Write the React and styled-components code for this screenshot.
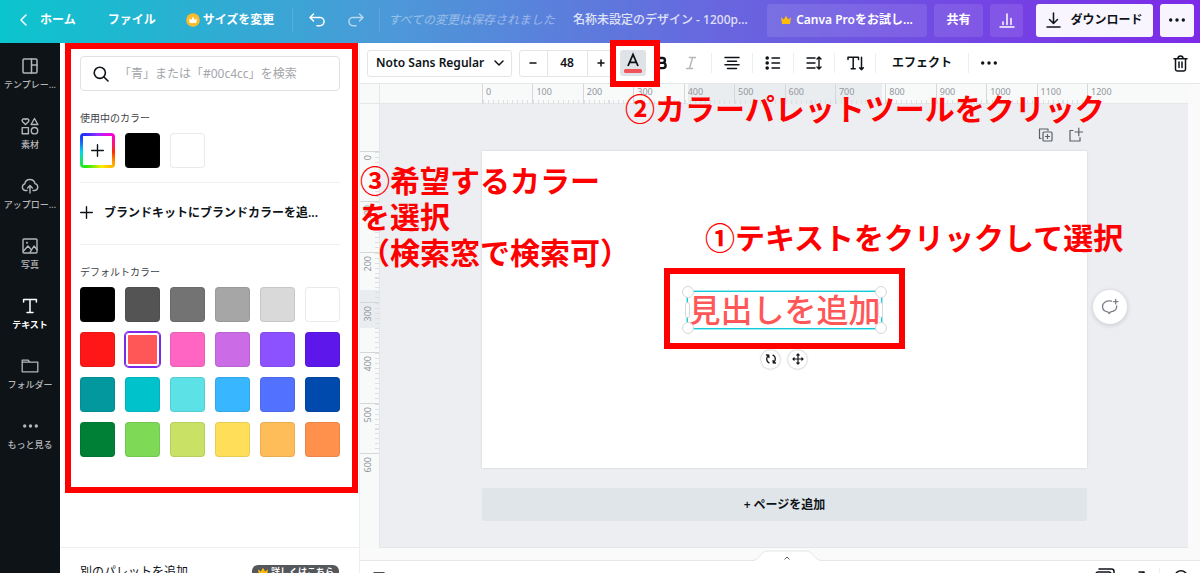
import React from "react";
import styled, { createGlobalStyle, css } from "styled-components";

const GlobalStyle = createGlobalStyle`
  *, *::before, *::after { box-sizing: border-box; }
  body {
    margin: 0;
    color: #0e1318;
    font-family: "Noto Sans", "Noto Sans CJK JP", sans-serif;
    font-size: 12px;
    line-height: 16px;
  }
  button, input, select {
    margin: 0;
    padding: 0;
    border: 0;
    background: none;
    color: inherit;
    font: inherit;
  }
  button { cursor: pointer; white-space: nowrap; }
  svg { display: block; flex: none; }
`;

const MARK = "#ff0000";
const LINE = "#e4e6e9";

/* ---------- icons ---------- */

function Icon({ w = 24, h, sw = 1.5, children }) {
  const height = h || w;
  return (
    <svg
      width={w}
      height={height}
      viewBox={`0 0 ${w} ${height}`}
      fill="none"
      stroke="currentColor"
      strokeWidth={sw}
      strokeLinecap="round"
      strokeLinejoin="round"
      aria-hidden="true"
    >
      {children}
    </svg>
  );
}

const Crown = () => (
  <svg width="10" height="10" viewBox="0 0 10 9" aria-hidden="true">
    <path d="M0 1.8 2.8 4 5 .3 7.200 4 10 1.800 9 8.500H1Z" fill="#fdbc0b" />
  </svg>
);

const CrownBadge = () => (
  <svg width="14" height="14" viewBox="0 0 14 14" aria-hidden="true">
    <circle cx="7" cy="7" r="6.8" fill="#fdbc2b" />
    <path d="M3 5.6 5.2 7 7 3.6 8.8 7 11 5.6 10.2 10H3.8Z" fill="#fff" />
  </svg>
);

const Dots = ({ w = 16, r = 1.7 }) => (
  <svg width={w} height="6" viewBox={`0 0 ${w} 6`} fill="currentColor" aria-hidden="true">
    <circle cx={r} cy="3" r={r} />
    <circle cx={w / 2} cy="3" r={r} />
    <circle cx={w - r} cy="3" r={r} />
  </svg>
);

const Plus = () => (
  <Icon w={13} sw={1.4}><path d="M6.5 .7v11.6M.7 6.5h11.6" /></Icon>
);

/* ---------- header ---------- */

const Shell = styled.div`
  display: flex;
  flex-direction: column;
  height: 100vh;
  overflow: hidden;
`;

const Header = styled.header`
  flex: none;
  display: flex;
  align-items: center;
  justify-content: space-between;
  height: 43px;
  padding: 0 6px 3px 20px;
  background: linear-gradient(90deg, #0bc5cd 0%, #4d98d8 33%, #6866df 60%, #7d2ae8 100%);
  color: #fff;
`;

const HeaderGroup = styled.div`
  display: flex;
  align-items: center;
`;

const NavButton = styled.button`
  display: flex;
  align-items: center;
  gap: ${(p) => p.$gap || 4}px;
  margin-right: ${(p) => p.$after || 0}px;
  font-weight: 700;
  opacity: ${(p) => (p.$dim ? 0.6 : 1)};
`;

const HeaderLine = styled.span`
  width: 1px;
  height: 24px;
  margin-right: ${(p) => p.$after}px;
  background: rgba(255, 255, 255, 0.12);
`;

const SavedNote = styled.span`
  margin-right: 18px;
  font-style: italic;
  opacity: 0.4;
  white-space: nowrap;
`;

const DesignTitle = styled.span`
  font-weight: 500;
  opacity: 0.8;
  white-space: nowrap;
`;

const HeaderButton = styled.button`
  display: flex;
  align-items: center;
  justify-content: center;
  gap: ${(p) => p.$gap || 5}px;
  width: ${(p) => p.$w}px;
  height: 33px;
  margin-left: ${(p) => p.$before || 7}px;
  border-radius: 3px;
  font-weight: 600;
  background: rgba(255, 255, 255, 0.1);
  ${(p) =>
    p.$solid &&
    css`
      background: #f9f5fe;
      color: #0e1318;
      font-weight: 700;
    `}
`;

/* ---------- left rail ---------- */

const Body = styled.div`
  flex: 1;
  display: flex;
  min-height: 0;
`;

const Rail = styled.nav`
  flex: none;
  width: 60px;
  padding-top: 9px;
  background: #0e1318;
`;

const RailItem = styled.button`
  display: flex;
  flex-direction: column;
  align-items: center;
  width: 100%;
  height: 60px;
  font-size: 9px;
  line-height: 12px;
  color: ${(p) => (p.$active ? "#fff" : "#b4b6b8")};
  font-weight: ${(p) => (p.$active ? 700 : 500)};
`;

const RailIcon = styled.span`
  display: grid;
  place-items: center;
  height: 27px;
`;

/* ---------- colour panel ---------- */

const Panel = styled.aside`
  position: relative;
  z-index: 2;
  flex: none;
  display: flex;
  flex-direction: column;
  width: 300px;
  border-right: 1px solid #eceef0;
  background: #fff;
`;

const PanelContent = styled.div`
  flex: 1;
  min-height: 0;
  overflow: hidden;
  padding: 13px 19px 0 20px;
`;

const SearchBox = styled.label`
  display: flex;
  align-items: center;
  gap: 10px;
  height: 35px;
  padding: 0 12px;
  border: 1px solid #dfe1e4;
  border-radius: 4px;
`;

const SearchInput = styled.input`
  flex: 1;
  min-width: 0;
  outline: 0;
  &::placeholder { color: #a3a6aa; opacity: 1; }
`;

const SectionTitle = styled.h2`
  margin: 19px 0 7px;
  font-size: 10px;
  font-weight: 400;
  line-height: 16px;
  color: #3f4347;
`;

const Swatches = styled.div`
  display: grid;
  grid-template-columns: repeat(6, 35px);
  justify-content: space-between;
  row-gap: 10px;
`;

const Swatch = styled.button`
  height: 35px;
  border-radius: 4px;
  background: ${(p) => p.$color};
  box-shadow: ${(p) =>
    p.$selected
      ? "0 0 0 1px #7d2ae8, inset 0 0 0 1px #7d2ae8, inset 0 0 0 3px #fff"
      : "inset 0 0 0 1px rgba(14, 19, 24, 0.09)"};
`;

const AddSwatch = styled.button`
  display: grid;
  height: 35px;
  padding: 3px;
  border-radius: 4px;
  background: conic-gradient(#9a2cff, #ff00d4 45deg, #ff2a00 95deg, #ffa800 130deg, #fff000 165deg, #2be80c 215deg, #00d9e8 265deg, #1d2cff 315deg, #9a2cff);
`;

const AddSwatchFace = styled.span`
  display: grid;
  place-items: center;
  background: #fff;
`;

const BrandButton = styled.button`
  display: flex;
  align-items: center;
  gap: 11px;
  width: 100%;
  height: 63px;
  margin-top: 14px;
  padding-bottom: 2px;
  border: solid #f0f1f3;
  border-width: 1px 0;
  font-weight: 600;
`;

const PanelFooter = styled.footer`
  flex: none;
  display: flex;
  align-items: flex-start;
  justify-content: space-between;
  height: 26px;
  padding: 16px 20px 0;
  border-top: 1px solid #eceef0;
  overflow: hidden;
`;

const MoreLink = styled.a`
  display: flex;
  align-items: center;
  gap: 3px;
  height: 16px;
  margin-top: 1px;
  padding: 0 5px 2px 6px;
  border-radius: 6px;
  background: #54575b;
  color: #fff;
  font-size: 9px;
  font-weight: 700;
  text-decoration: none;
`;

const PanelFrame = styled.div`
  position: absolute;
  top: 0;
  left: 5px;
  right: 1px;
  height: 450px;
  border: 6px solid ${MARK};
  pointer-events: none;
`;

/* ---------- toolbar ---------- */

const Main = styled.main`
  position: relative;
  flex: 1;
  display: flex;
  flex-direction: column;
  min-width: 0;
`;

const Toolbar = styled.div`
  flex: none;
  display: flex;
  align-items: center;
  height: 41px;
  padding: 0 12px 0 7px;
  border-bottom: 1px solid ${LINE};
  background: #fff;
`;

const FontPicker = styled.label`
  display: flex;
  align-items: center;
  width: 145px;
  height: 27px;
  padding: 0 7px 0 8px;
  border: 1px solid #e3e5e8;
  border-radius: 3px;
`;

const FontSelect = styled.select`
  flex: 1;
  min-width: 0;
  appearance: none;
  outline: 0;
  font-weight: 600;
`;

const SizeGroup = styled.div`
  display: flex;
  width: 96px;
  height: 27px;
  margin-left: 7px;
  border: 1px solid #e3e5e8;
  border-radius: 3px;
`;

const SizeStep = styled.button`
  display: grid;
  place-items: center;
  flex: 1;
`;

const SizeInput = styled.input`
  width: 41px;
  border: solid #e3e5e8;
  border-width: 0 1px;
  outline: 0;
  text-align: center;
  font-weight: 600;
`;

const ToolGroup = styled.div`
  display: flex;
  align-items: center;
  margin-right: 5px;
`;

const ToolButton = styled.button`
  display: grid;
  place-items: center;
  width: ${(p) => p.$w || 40}px;
  height: 26px;
  border-radius: 3px;
  font-weight: 600;
  opacity: ${(p) => (p.$dim ? 0.3 : 1)};
`;

const ColorButton = styled(ToolButton)`
  position: relative;
  margin: 0 2px 0 5px;
  background: #dfe2e6;
`;

const ColorFrame = styled.span`
  position: absolute;
  z-index: 3;
  inset: -10px -14px -11px -10px;
  border: 6px solid ${MARK};
  pointer-events: none;
`;

const Divider = styled.span`
  width: 1px;
  height: 20px;
  background: #eceef0;
`;

const Spacer = styled.span`
  flex: 1;
`;

/* ---------- workspace ---------- */

const Workspace = styled.div`
  flex: 1;
  display: grid;
  grid-template: 20px minmax(0, 1fr) / 20px minmax(0, 1fr) 12px;
  min-height: 0;
  background: #fafafa;
`;

const Corner = styled.div`
  border: solid ${LINE};
  border-width: 0 1px 1px 0;
  background: #f8fafa;
`;

const RulerX = styled.div`
  display: grid;
  grid-template: 20px / 102px repeat(12, minmax(0, 1fr)) 101px;
  border-bottom: 1px solid ${LINE};
  background: #f8fafa;
`;

const tickLabel = css`
  font-size: 9px;
  line-height: 16px;
  color: #93979c;
`;

const TickX = styled.span`
  ${tickLabel}
  grid-area: 1 / ${(p) => p.$col};
  padding-left: 3px;
  border-left: 1px solid #d5d8db;
  ${(p) =>
    !p.$last &&
    css`
      background: repeating-linear-gradient(90deg, #dde0e3 0 1px, transparent 1px 10%) 0 100% / 100% 4px no-repeat;
    `}
`;

const RangeX = styled.span`
  grid-area: 1 / 2 / 2 / 14;
  justify-self: center;
  width: 194px;
  background: #eaedf0;
`;

const RulerY = styled.div`
  grid-column: 1;
  padding-top: 47px;
  border-right: 1px solid ${LINE};
  background: #f8fafa;
`;

const ScaleY = styled.div`
  display: grid;
  grid-template: repeat(6, 100fr) 30fr / 19px;
  height: 317px;
`;

const TickY = styled.span`
  grid-area: ${(p) => p.$row} / 1;
  min-height: 0;
  border-top: 1px solid #d5d8db;
  ${(p) =>
    !p.$last &&
    css`
      background: repeating-linear-gradient(180deg, #dde0e3 0 1px, transparent 1px 10%) 100% 0 / 4px 100% no-repeat;
    `}
`;

const TickYText = styled.span`
  ${tickLabel}
  display: block;
  width: 17px;
  padding-bottom: 3px;
  writing-mode: vertical-rl;
  transform: rotate(180deg);
`;

const RangeY = styled.span`
  grid-area: 1 / 1 / 8 / 2;
  align-self: center;
  height: 38px;
  background: #eaedf0;
`;

const Canvas = styled.div`
  position: relative;
  padding: 22px 101px 0 102px;
  border-bottom: 1px solid ${LINE};
  background: #eceef2;
`;

const PageActions = styled.div`
  display: flex;
  justify-content: flex-end;
  gap: 15px;
  height: 25px;
  padding-right: 4px;
  color: #5b6066;
`;

const ActionButton = styled.button`
  height: 18px;
`;

const Page = styled.section`
  display: grid;
  place-items: center;
  height: 317px;
  background: #fff;
  box-shadow: 0 0 2px rgba(14, 19, 24, 0.14);
`;

const TextBox = styled.div`
  position: relative;
  border: 1px solid #11cbd8;
  outline: 1px solid rgba(17, 203, 216, 0.4);
  font-size: 32px;
  font-weight: 500;
  line-height: 36px;
  color: #ff5757;
  white-space: nowrap;
`;

const TextMark = styled.span`
  position: absolute;
  inset: -24px -24px -21px -24px;
  border: 6px solid ${MARK};
`;

const Handle = styled.span`
  position: absolute;
  width: 12px;
  height: 12px;
  margin: -6px;
  border: 1px solid #d5d8db;
  border-radius: 6px;
  background: #fff;
  top: ${(p) => p.$y};
  left: ${(p) => p.$x};
  ${(p) =>
    p.$side &&
    css`
      width: 5px;
      height: 16px;
      margin: -8px -3px;
      border-radius: 3px;
    `}
`;

const FloatTools = styled.div`
  position: absolute;
  top: 58px;
  left: 0;
  right: 0;
  display: flex;
  justify-content: center;
  gap: 8px;
  color: #0e1318;
`;

const RoundButton = styled.button`
  display: grid;
  place-items: center;
  width: 19px;
  height: 19px;
  border-radius: 50%;
  background: #fff;
  box-shadow: 0 0 2px rgba(14, 19, 24, 0.4);
`;

const CommentButton = styled(RoundButton)`
  position: absolute;
  top: 186px;
  right: 61px;
  width: 34px;
  height: 34px;
  color: #7b7f84;
  box-shadow: 0 1px 5px rgba(14, 19, 24, 0.18);
`;

const AddPage = styled.button`
  width: 100%;
  height: 33px;
  margin-top: 20px;
  border-radius: 2px;
  background: #e0e5e9;
  font-weight: 600;
`;

const Notes = styled.div`
  position: relative;
  flex: none;
  height: 12px;
  background: #fafafa;
`;

const NotesTab = styled.button`
  position: absolute;
  left: 50%;
  bottom: -1px;
  width: 70px;
  margin-left: -28px;
`;

const StatusBar = styled.footer`
  flex: none;
  display: flex;
  align-items: flex-start;
  gap: 14px;
  height: 13px;
  padding: 7px 12px 0 13px;
  border-top: 1px solid ${LINE};
  background: #fff;
  overflow: hidden;
`;

const Callout = styled.p`
  position: absolute;
  z-index: 3;
  margin: 0;
  font-size: 30px;
  font-weight: 700;
  line-height: 36px;
  color: ${MARK};
  white-space: nowrap;
  font-family: "Noto Sans CJK JP", sans-serif;
  top: ${(p) => p.$top}px;
  left: ${(p) => p.$left}px;
`;

/* ---------- data ---------- */

const railItems = [
  ["テンプレー...", <Icon w={16}><rect x="1" y="1" width="14" height="14" rx="1" /><path d="M9.5 1v14M9.5 7H15" /></Icon>],
  ["素材", <Icon w={18} sw={1.4}><path d="M4.5 7.6 1.6 4.7a1.8 1.8 0 0 1 2.9-2.2 1.8 1.8 0 0 1 2.9 2.2ZM13.5 1.5l3.4 6h-6.8Z" /><rect x="1.2" y="10.6" width="6.2" height="6.2" /><circle cx="13.5" cy="13.7" r="3.2" /></Icon>],
  ["アップロー...", <Icon w={18} h={16} sw={1.4}><path d="M6 12.5H4.2a3.4 3.4 0 0 1-.4-6.6A5.2 5.2 0 0 1 14 5.6a3.5 3.5 0 0 1-.3 6.9H12M9 15V8M6.6 10 9 7.6 11.4 10" /></Icon>],
  ["写真", <Icon w={16} sw={1.4}><rect x="1" y="1" width="14" height="14" rx="1" /><path d="M1.5 13 6 8l3 3.4M8 14.4 12 8l3 3.6" /><circle cx="5" cy="4.8" r="1" fill="currentColor" stroke="none" /></Icon>],
  ["テキスト", <Icon w={16}><path d="M1.6 4V1.6h12.8V4M8 1.6v12.6M5 14.4h6" /></Icon>, true],
  ["フォルダー", <Icon w={18} h={14} sw={1.3}><path d="M1.2 12.8V1.2h6l1.6 2h8v9.6ZM1.2 3.2h7" /></Icon>],
  ["もっと見る", <Dots w={15} />],
];

const palette = [
  "#000000", "#545454", "#737373", "#a6a6a6", "#d9d9d9", "#ffffff",
  "#ff1616", "#ff5757", "#ff66c4", "#cb6ce6", "#8c52ff", "#5e17eb",
  "#03989e", "#00c2cb", "#5ce1e6", "#38b6ff", "#5271ff", "#004aad",
  "#008037", "#7ed957", "#c9e265", "#ffde59", "#ffbd59", "#ff914d",
];

const ticksX = Array.from({ length: 13 }, (_, i) => i * 100);
const ticksY = Array.from({ length: 7 }, (_, i) => i * 100);

/* ---------- app ---------- */

function TopBar() {
  return (
    <Header>
      <HeaderGroup>
        <NavButton $gap={13} $after={32}>
          <Icon w={7} h={12}><path d="M6 1 1 6l5 5" /></Icon>
          ホーム
        </NavButton>
        <NavButton $after={30}>ファイル</NavButton>
        <NavButton $gap={3} $after={18}>
          <CrownBadge />
          サイズを変更
        </NavButton>
        <HeaderLine $after={16} />
        <NavButton $after={23} aria-label="元に戻す">
          <Icon w={16} h={14}><path d="M4.5 1 1 4.5 4.5 8M1.2 4.5H11a4 4 0 0 1 0 8.2H8" /></Icon>
        </NavButton>
        <NavButton $dim $after={15} aria-label="やり直す">
          <Icon w={16} h={14}><path d="M11.5 1 15 4.5 11.5 8M14.8 4.5H5a4 4 0 0 0 0 8.2h3" /></Icon>
        </NavButton>
        <HeaderLine $after={8} />
        <SavedNote>すべての変更は保存されました</SavedNote>
        <DesignTitle>名称未設定のデザイン - 1200p...</DesignTitle>
      </HeaderGroup>
      <HeaderGroup>
        <HeaderButton $w={160}><Crown />Canva Proをお試し...</HeaderButton>
        <HeaderButton $w={49}>共有</HeaderButton>
        <HeaderButton $w={33} aria-label="統計">
          <Icon w={16} h={15}><path d="M1 14h14M4 11.5V9M8 11.5V1M12 11.5V5.5" /></Icon>
        </HeaderButton>
        <HeaderButton $solid $w={117} $before={13} $gap={9}>
          <Icon w={15} h={16}><path d="M7.5 1v10M3.5 7.5l4 4 4-4M1 15h13" /></Icon>
          ダウンロード
        </HeaderButton>
        <HeaderButton $solid $w={34} aria-label="その他"><Dots /></HeaderButton>
      </HeaderGroup>
    </Header>
  );
}

function ColorPanel() {
  return (
    <Panel>
      <PanelContent>
        <SearchBox>
          <Icon w={16} sw={1.6}><circle cx="6.8" cy="6.8" r="5.6" /><path d="m11 11 4 4" /></Icon>
          <SearchInput type="search" aria-label="カラーを検索" placeholder="「青」または「#00c4cc」を検索" />
        </SearchBox>
        <SectionTitle>使用中のカラー</SectionTitle>
        <Swatches>
          <AddSwatch aria-label="新しいカラーを追加">
            <AddSwatchFace><Plus /></AddSwatchFace>
          </AddSwatch>
          <Swatch $color="#000000" aria-label="#000000" />
          <Swatch $color="#ffffff" aria-label="#ffffff" />
        </Swatches>
        <BrandButton>
          <Plus />
          ブランドキットにブランドカラーを追...
        </BrandButton>
        <SectionTitle>デフォルトカラー</SectionTitle>
        <Swatches>
          {palette.map((c) => (
            <Swatch key={c} $color={c} $selected={c === "#ff5757"} aria-label={c} />
          ))}
        </Swatches>
      </PanelContent>
      <PanelFooter>
        <span>別のパレットを追加</span>
        <MoreLink href="#more"><Crown />詳しくはこちら</MoreLink>
      </PanelFooter>
      <PanelFrame />
    </Panel>
  );
}

function TextToolbar() {
  return (
    <Toolbar>
      <FontPicker>
        <FontSelect aria-label="フォント" defaultValue="noto">
          <option value="noto">Noto Sans Regular</option>
        </FontSelect>
        <Icon w={10} h={6}><path d="m1 1 4 4 4-4" /></Icon>
      </FontPicker>
      <SizeGroup>
        <SizeStep aria-label="小さく"><Icon w={8}><path d="M1 4h6" /></Icon></SizeStep>
        <SizeInput aria-label="フォントサイズ" defaultValue="48" />
        <SizeStep aria-label="大きく"><Icon w={8}><path d="M1 4h6M4 1v6" /></Icon></SizeStep>
      </SizeGroup>
      <ToolGroup>
        <ColorButton $w={26} aria-label="テキストカラー">
          <svg width="20" height="22" viewBox="0 0 20 22" aria-hidden="true">
            <path d="M5 14 10 2.500 15 14M6.800 10.300h6.400" fill="none" stroke="#0e1318" strokeWidth="1.800" />
            <rect x="1" y="17" width="18" height="4" rx="1.500" fill="#f0545a" />
          </svg>
          <ColorFrame />
        </ColorButton>
        <ToolButton $w={28} aria-label="太字">
          <Icon w={12} h={14} sw={2.4}><path d="M2.5 2H6.500a2.400 2.400 0 0 1 0 4.900H2.500ZM2.500 6.900H7a2.600 2.600 0 0 1 0 5.200H2.500Z" /></Icon>
        </ToolButton>
        <ToolButton $w={30} $dim aria-label="斜体">
          <Icon w={12} h={14} sw={1.4}><path d="M4.5 1.5h6M1.5 12.5h6M7.7 1.5 4.4 12.5" /></Icon>
        </ToolButton>
      </ToolGroup>
      <Divider />
      <ToolButton aria-label="配置">
        <Icon w={16} h={14}><path d="M1 1.5h14M3.5 5.2h9M1 8.8h14M3.5 12.500h9" /></Icon>
      </ToolButton>
      <Divider />
      <ToolButton aria-label="リスト">
        <Icon w={16} h={14}>
          <path d="M7 2h7.5M7 7h7.5M7 12h7.5" />
          <g fill="currentColor" stroke="none"><circle cx="2.2" cy="2" r="1.8" /><circle cx="2.2" cy="7" r="1.8" /><circle cx="2.2" cy="12" r="1.8" /></g>
        </Icon>
      </ToolButton>
      <Divider />
      <ToolButton aria-label="間隔">
        <Icon w={16} h={14} sw={1.4}><path d="M1 2h8M1 7h8M1 12h8M13 1v12M11 3l2-2 2 2M11 11l2 2 2-2" /></Icon>
      </ToolButton>
      <Divider />
      <ToolButton aria-label="縦書き">
        <Icon w={17} h={15}><path d="M1 3.5V1.2h10.500v2.300M6.200 1.200v11.600M4.200 12.800h4M14.500 1.200v12.500M12.700 11.800l1.800 1.900 1.800-1.900" /></Icon>
      </ToolButton>
      <Divider />
      <ToolButton $w={92}>エフェクト</ToolButton>
      <Divider />
      <ToolButton aria-label="もっと見る"><Dots /></ToolButton>
      <Spacer />
      <ToolButton $w={16} aria-label="削除">
        <Icon w={15} h={17}><path d="M1 3.8h13M5 3.5c0-3.300 5-3.300 5 0M2.500 4v10.200a1.700 1.700 0 0 0 1.700 1.700h6.600a1.700 1.700 0 0 0 1.700-1.700V4M6 7v5.500M9 7v5.500" /></Icon>
      </ToolButton>
    </Toolbar>
  );
}

function Editor() {
  return (
    <Workspace>
      <Corner />
      <RulerX>
        <RangeX />
        {ticksX.map((t, i) => (
          <TickX key={t} $col={i + 2} $last={t === 1200}>{t}</TickX>
        ))}
      </RulerX>
      <span />
      <RulerY>
        <ScaleY>
          <RangeY />
          {ticksY.map((t, i) => (
            <TickY key={t} $row={i + 1} $last={t === 600}><TickYText>{t}</TickYText></TickY>
          ))}
        </ScaleY>
      </RulerY>
      <Canvas>
        <PageActions>
          <ActionButton aria-label="ページをコピー">
            <Icon w={15} h={16} sw={1.2}><path d="M3 11.500H1.500V2H10v1.500M9.500 7.500v4M7.500 9.500h4" /><rect x="5" y="5" width="9" height="9" rx="1" /></Icon>
          </ActionButton>
          <ActionButton aria-label="ページを追加">
            <Icon w={15} h={16} sw={1.2}><path d="M5 3.500H2V14h10v-3.500M7 5h7.500M10.800 1.200v7.500" /></Icon>
          </ActionButton>
        </PageActions>
        <Page>
          <TextBox>
            見出しを追加
            <Handle $x="0" $y="0" />
            <Handle $x="100%" $y="0" />
            <Handle $x="0" $y="100%" />
            <Handle $x="100%" $y="100%" />
            <Handle $side $x="0" $y="50%" />
            <Handle $side $x="100%" $y="50%" />
            <TextMark />
            <FloatTools>
              <RoundButton aria-label="回転">
                <Icon w={12} sw={1.3}><path d="M4 9.800C1.200 8.500.8 4.500 3.500 2.500M1.500 2l2.300.2.100 2.300M8 2.200c2.800 1.300 3.200 5.300.5 7.300M10.500 10l-2.300-.2-.1-2.300" /></Icon>
              </RoundButton>
              <RoundButton aria-label="移動">
                <Icon w={12} sw={1.2}><path d="M6 1v10M1 6h10M4.800 2.200 6 1l1.200 1.200M4.800 9.800 6 11l1.200-1.200M2.200 4.800 1 6l1.200 1.200M9.800 4.800 11 6 9.800 7.200" /></Icon>
              </RoundButton>
            </FloatTools>
          </TextBox>
        </Page>
        <AddPage>+ ページを追加</AddPage>
        <CommentButton aria-label="コメントを追加">
          <Icon w={18} sw={1.3}><path d="M10.500 3.200C5.500 2 1.500 4.800 1.500 8.500c0 3 2.300 5 5.300 5.300l1.400 1.700 1.500-1.700c4-.4 6.300-2.800 6-6M14.700 1.500v4.400M12.500 3.700h4.400" /></Icon>
        </CommentButton>
      </Canvas>
    </Workspace>
  );
}

export default function App() {
  return (
    <>
      <GlobalStyle />
      <Shell>
        <TopBar />
        <Body>
          <Rail>
            {railItems.map(([label, icon, active]) => (
              <RailItem key={label} $active={active}>
                <RailIcon>{icon}</RailIcon>
                <span>{label}</span>
              </RailItem>
            ))}
          </Rail>
          <ColorPanel />
          <Main>
            <TextToolbar />
            <Editor />
            <Notes>
              <NotesTab aria-label="メモを開く">
                <svg width="70" height="11" viewBox="0 0 70 11" aria-hidden="true">
                  <path d="M0 11C8 11 8 1 16 1h38c8 0 8 10 16 10Z" fill="#fff" />
                  <path d="M0 10.500C8 10.500 8 1 16 1h38c8 0 8 9.500 16 9.500" fill="none" stroke={LINE} />
                  <path d="m32.500 9.500 2.500-2.500 2.500 2.500" fill="none" stroke="#5b6066" />
                </svg>
              </NotesTab>
            </Notes>
            <StatusBar>
              <Icon w={12} h={16}><path d="M1 5h10" /></Icon>
              <Spacer />
              <Icon w={20} h={16}><path d="M4 1h12.500q2.500 0 2.500 2.500V12" /><rect x="1" y="4" width="15" height="12" rx="2" /></Icon>
              <Icon w={16} h={16}><path d="M10 4h5v5M15 4l-5 5" /></Icon>
              <Divider />
              <Icon w={14} h={16}><circle cx="7" cy="9" r="6.200" /></Icon>
            </StatusBar>
            <Callout $top={46} $left={265}>②カラーパレットツールをクリック</Callout>
            <Callout $top={175} $left={345}>①テキストをクリックして選択</Callout>
            <Callout $top={118} $left={0}>
              ③希望するカラー<br />を選択<br />（検索窓で検索可）
            </Callout>
          </Main>
        </Body>
      </Shell>
    </>
  );
}
